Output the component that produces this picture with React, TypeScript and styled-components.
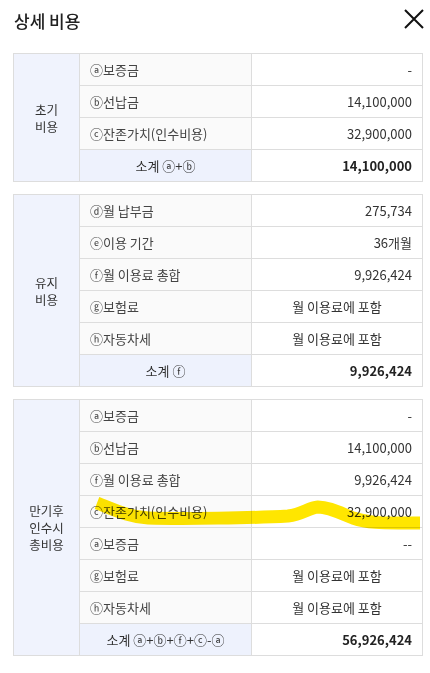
import React, { FC } from 'react';
import styled, { createGlobalStyle } from 'styled-components';

type Row = {
    label: string
    value: string
    center?: boolean
}

type SectionType = {
    title: string[]
    rows: Row[]
    subLabel: string
    subValue: string
    mark?: boolean
}

const sections: SectionType[] = [
    {
        title: ['초기', '비용'],
        rows: [
            {label: 'ⓐ보증금', value: '-'},
            {label: 'ⓑ선납금', value: '14,100,000'},
            {label: 'ⓒ잔존가치(인수비용)', value: '32,900,000'},
        ],
        subLabel: '소계 ⓐ+ⓑ',
        subValue: '14,100,000',
    },
    {
        title: ['유지', '비용'],
        rows: [
            {label: 'ⓓ월 납부금', value: '275,734'},
            {label: 'ⓔ이용 기간', value: '36개월'},
            {label: 'ⓕ월 이용료 총합', value: '9,926,424'},
            {label: 'ⓖ보험료', value: '월 이용료에 포함', center: true},
            {label: 'ⓗ자동차세', value: '월 이용료에 포함', center: true},
        ],
        subLabel: '소계 ⓕ',
        subValue: '9,926,424',
    },
    {
        title: ['만기후', '인수시', '총비용'],
        rows: [
            {label: 'ⓐ보증금', value: '-'},
            {label: 'ⓑ선납금', value: '14,100,000'},
            {label: 'ⓕ월 이용료 총합', value: '9,926,424'},
            {label: 'ⓒ잔존가치(인수비용)', value: '32,900,000'},
            {label: 'ⓐ보증금', value: '--'},
            {label: 'ⓖ보험료', value: '월 이용료에 포함', center: true},
            {label: 'ⓗ자동차세', value: '월 이용료에 포함', center: true},
        ],
        subLabel: '소계 ⓐ+ⓑ+ⓕ+ⓒ-ⓐ',
        subValue: '56,926,424',
        mark: true,
    },
]

const CostSection: FC<{section: SectionType}> = ({section}) => {
    const total = section.rows.length + 1
    return (
        <TableWrap>
            <Table>
                <tbody>
                {section.rows.map((row, index) => (
                    <tr key={index}>
                        {index === 0 && (
                            <SectionHead rowSpan={total}>
                                {section.title.map((t) => <HeadLine key={t}>{t}</HeadLine>)}
                            </SectionHead>
                        )}
                        <ItemCell>{row.label}</ItemCell>
                        <ValueCell $center={row.center}>{row.value}</ValueCell>
                    </tr>
                ))}
                <tr>
                    <SubLabel>{section.subLabel}</SubLabel>
                    <SubValue>{section.subValue}</SubValue>
                </tr>
                </tbody>
            </Table>
            {section.mark && (
                // 형광펜 표시 (잔존가치 행)
                <Marker width="410" height="258" viewBox="0 0 410 258">
                    <path
                        d="M84 104 C 100 110, 115 118, 135 119 C 170 120, 240 119, 275 117 C 290 115, 295 109, 305 108 C 315 108, 325 113, 340 119 C 355 124, 370 124, 385 124 L 407 124"
                        fill="none"
                        stroke="#ffe600"
                        strokeWidth="13"
                        strokeLinecap="butt"
                        strokeLinejoin="round"
                    />
                </Marker>
            )}
        </TableWrap>
    )
}

export default function App() {
    return (
        <>
            <GlobalStyle/>
            <Page>
                <Header>
                    <Title>상세 비용</Title>
                    <CloseBtn aria-label="닫기">
                        <svg width="20" height="20" viewBox="0 0 20 20">
                            <path d="M1 1 L19 19 M19 1 L1 19" stroke="#111" strokeWidth="2" fill="none"/>
                        </svg>
                    </CloseBtn>
                </Header>
                <List>
                    {sections.map((s, i) => <CostSection key={i} section={s}/>)}
                </List>
            </Page>
        </>
    )
}

const GlobalStyle = createGlobalStyle`
  body {
    margin: 0;
    background: #fff;
    font-family: "Noto Sans CJK KR", "Noto Sans", sans-serif;
    color: #333;
  }
`

const Page = styled.div`
  width: 430px;
  padding: 0 6px 0 13px;
  box-sizing: border-box;
`

const Header = styled.div`
  display: flex;
  align-items: center;
  justify-content: space-between;
  height: 40px;
  margin-bottom: 13px;
`

const Title = styled.h2`
  margin: 0;
  font-size: 17px;
  font-weight: 500;
  color: #222;
  padding-left: 1px;
`

const CloseBtn = styled.button`
  display: flex;
  border: none;
  background: none;
  padding: 0;
  margin-top: -2px;
  cursor: pointer;
`

const List = styled.div`
  display: flex;
  flex-direction: column;
  gap: 12px;
  width: 410px;
`

const TableWrap = styled.div`
  position: relative;
`

const Table = styled.table`
  width: 410px;
  border-collapse: collapse;
  border: 1px solid #aaa;
  table-layout: fixed;
  font-size: 13px;

  & td {
    height: 32px;
    padding: 0 10px;
    border: 1px solid #ddd;
    box-sizing: border-box;
  }
`

const SectionHead = styled.td`
  width: 66px;
  background: #f0f3fd;
  text-align: center;
  vertical-align: middle;
  color: #333;
  && {
    padding: 0;
  }
`

const HeadLine = styled.div`
  font-size: 12.5px;
  line-height: 17px;
  height: 17px;
`

const ItemCell = styled.td`
  width: 172px;
  background: #fafafa;
  color: #444;
`

const ValueCell = styled.td<{$center?: boolean}>`
  background: #fff;
  text-align: ${props => props.$center ? 'center' : 'right'};
  color: #333;
`

const SubLabel = styled.td`
  background: #eef2fd;
  text-align: center;
  color: #333;
`

const SubValue = styled.td`
  background: #fff;
  text-align: right;
  font-weight: 700;
  color: #222;
`

const Marker = styled.svg`
  position: absolute;
  left: 0;
  top: 0;
  pointer-events: none;
  mix-blend-mode: multiply;
`
